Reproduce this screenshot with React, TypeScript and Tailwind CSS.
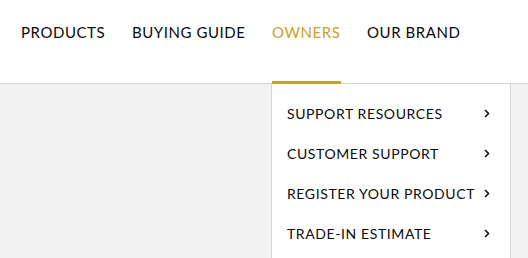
import React from "react";

const Chevron = () => (
  <svg width="6" height="9" viewBox="0 0 6 9" className="block">
    <path d="M1 1 L4.5 4.5 L1 8" fill="none" stroke="#111" strokeWidth="1.6" />
  </svg>
);

export default function App() {
  const nav = [
    { label: "PRODUCTS", w: "w-[85px]", active: false },
    { label: "BUYING GUIDE", w: "w-[114px]", active: false },
    { label: "OWNERS", w: "w-[69px]", active: true },
    { label: "OUR BRAND", w: "w-[94px]", active: false },
  ];
  const items = ["SUPPORT RESOURCES", "CUSTOMER SUPPORT", "REGISTER YOUR PRODUCT", "TRADE-IN ESTIMATE"];
  return (
    <div
      className="relative w-[528px] h-[258px] overflow-hidden bg-[#f2f2f2]"
      style={{ fontFamily: "Lato, 'Open Sans', sans-serif" }}
    >
      <header className="h-[84px] bg-white border-b border-[#d6d6d6]">
        <nav className="flex gap-[26px] pl-[21px] h-full">
          {nav.map((n) => (
            <div key={n.label} className={`relative ${n.w} h-full`}>
              <div
                className={`pt-[23px] text-[15px] leading-[18px] tracking-[0.55px] whitespace-nowrap ${
                  n.active ? "text-[#c9a227]" : "text-[#0a0a0a]"
                }`}
              >
                {n.label}
              </div>
              {n.active && <div className="absolute left-0 right-0 bottom-[-1px] h-[3px] bg-[#c9a227]" />}
            </div>
          ))}
        </nav>
      </header>
      <div className="absolute left-[271px] top-[84px] w-[240px] h-[200px] bg-white border-x border-[#d6d6d6] pt-[9px]">
        {items.map((it) => (
          <div key={it} className="flex items-center h-[40px] pl-[15px] pr-[20px] justify-between">
            <span className="text-[14px] tracking-[0.6px] text-[#0a0a0a] whitespace-nowrap">{it}</span>
            <Chevron />
          </div>
        ))}
      </div>
    </div>
  );
}
